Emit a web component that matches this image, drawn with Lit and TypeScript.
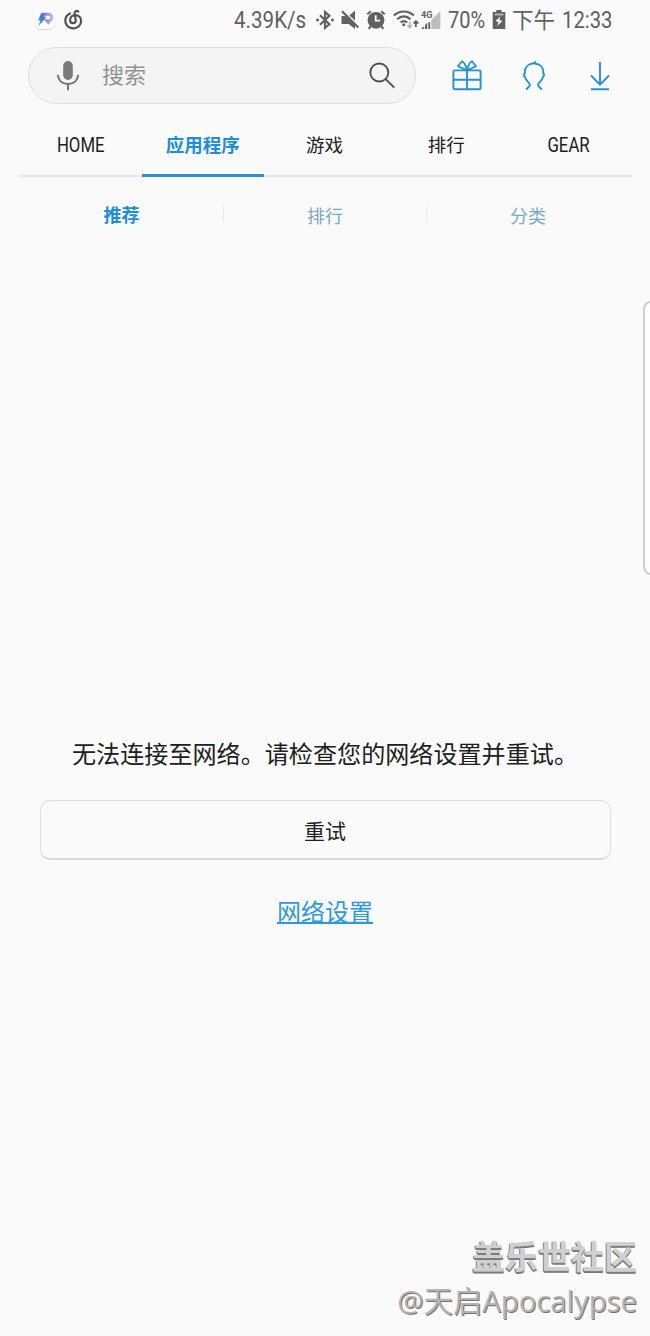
import { LitElement, html, css, svg } from "lit";
import { customElement, state } from "lit/decorators.js";

const GREY = "#616161";
const BLUE = "#2492d8";

const appBadge = svg`<svg width="22" height="22" viewBox="0 0 22 22">
  <defs>
    <linearGradient id="bolt" x1="0" y1="1" x2="1" y2="0"><stop offset="0" stop-color="#35c3e8"/><stop offset=".55" stop-color="#3f74dc"/><stop offset="1" stop-color="#8a8be0"/></linearGradient>
    <linearGradient id="loop" x1="0" y1="0" x2="1" y2="0"><stop offset="0" stop-color="#6f86de"/><stop offset="1" stop-color="#cba7e2"/></linearGradient>
  </defs>
  <rect x=".8" y="1.500" width="20.400" height="19.500" rx="6.500" fill="#dcd8d8"/>
  <rect x=".8" y=".5" width="20.400" height="19.500" rx="6.500" fill="#fdfdfe"/>
  <path d="M10 5.200h4.500a2.900 2.900 0 0 1 0 6.600h-1.500l2.400 2.800" fill="none" stroke="url(#loop)" stroke-width="3"/>
  <path d="M7.300 3.700h4.500l-1.400 4h2.200L4.200 17.500l2.200-6H4z" fill="url(#bolt)"/>
</svg>`;

const swirl = svg`<svg width="20" height="22" viewBox="0 0 20 22" fill="none" stroke="#505050" stroke-width="2.200" stroke-linecap="round">
  <path d="M6 4.500C3.200 5.800 1.300 8.500 1.300 11.800c0 4.500 3.500 7.600 7.900 7.600s7.900-3.200 7.900-7.500c0-3.300-2.400-5.700-5.900-5.700-3.100 0-5.100 2.100-5.100 4.700 0 2 1.200 3.300 3 3.300 1.900 0 2.900-1.500 2.600-3.200L10.600 4.800c-.4-2.600 2-3.700 3.700-2.200"/>
</svg>`;

const bluetooth = svg`<svg width="18" height="20" viewBox="0 0 18 20" fill="none" stroke="${GREY}" stroke-width="2.200">
  <path d="M4 5.300l9.400 9L9 18V2l4.400 3.800L4 14.700"/><circle cx="1.500" cy="10" r="1.500" fill="${GREY}" stroke="none"/><circle cx="16.500" cy="10" r="1.500" fill="${GREY}" stroke="none"/>
</svg>`;

const mute = svg`<svg width="18" height="20" viewBox="0 0 18 20" fill="${GREY}">
  <path d="M.500 6h4.200L14 14.800V19L7.700 14H.500zM8.400 5.500L14 .600v10z"/><path d="M1 1.200l16.300 16.300" stroke="${GREY}" stroke-width="2.200"/>
</svg>`;

const alarm = svg`<svg width="20" height="20" viewBox="0 0 20 20">
  <circle cx="10" cy="10.300" r="8.400" fill="${GREY}"/><path d="M1.300 4.300L4.800 1.300M18.700 4.300l-3.500-3M4.500 16.500L2.600 18.800M15.500 16.500l1.900 2.300" stroke="${GREY}" stroke-width="2"/>
  <path d="M9.700 5.300v5.400h4.300" fill="none" stroke="#fafafa" stroke-width="1.800"/>
</svg>`;

const wifi = svg`<svg width="26" height="20" viewBox="0 0 26 20" fill="none" stroke="${GREY}" stroke-width="2.100">
  <path d="M.800 5.600c5.700-5.500 14.400-5.500 20.100 0M4.200 9.200c4-3.800 9.300-3.800 13.300 0M7.600 12.600c2-1.900 4.600-1.900 6.600 0"/><circle cx="10.700" cy="14.800" r="1.500" fill="${GREY}" stroke="none"/>
  <path d="M16.700 11.500v6M14.600 15.300l2.100 2.300 2.100-2.300" stroke="#b4b4b4" stroke-width="1.500"/><path d="M22.900 17v-5M20.600 13.600l2.300-2.600 2.300 2.600" stroke-width="1.700"/>
</svg>`;

const signal = svg`<svg width="20" height="20" viewBox="0 0 20 20">
  <path d="M19.300 1v18H10.300V10z" fill="#bdbdbd"/><path d="M0 19l2.800-2.800V19zM4 19v-4l2.200-2.200V19zM7.300 19v-6.800h1.900V19z" fill="${GREY}"/>
  <text x="0" y="8" class="net" textLength="11.5" lengthAdjust="spacingAndGlyphs">4G</text>
</svg>`;

const battery = svg`<svg width="14" height="20" viewBox="0 0 14 20">
  <path d="M4.300 0h5.200v2h3.800v17H.700V2h3.600z" fill="${GREY}"/><path d="M2.600 3.500h8.800v2H2.600z" fill="#b5b5b5"/>
  <path d="M8.300 6.500L3.600 11.100l3 1-1.400 4 5.200-5-3-1z" fill="#fafafa"/>
</svg>`;

const mic = svg`<svg width="24" height="32" viewBox="0 0 24 32" fill="none" stroke="#6f6f6f">
  <rect x="7.200" y="1" width="9.600" height="19" rx="4.800" fill="#7a7a7a" stroke="none"/>
  <path d="M1.800 14.800C2.300 20.500 6.200 24 12 24s9.700-3.500 10.200-9.200M12 24v6.300" stroke-width="1.900"/>
</svg>`;

const lens = svg`<svg width="28" height="28" viewBox="0 0 28 28" fill="none" stroke="#505050" stroke-width="1.900">
  <circle cx="11.300" cy="10.500" r="9"/><path d="M17.500 17l8.800 8.600"/>
</svg>`;

const gift = svg`<svg width="30" height="32" viewBox="0 0 30 32" fill="none" stroke="${BLUE}" stroke-width="1.900" stroke-linejoin="round">
  <rect x="1.400" y="10.400" width="27.200" height="18.800" rx="1.300"/><path d="M1.400 19.800h27.200M15 10.400V29"/>
  <path d="M15 10.400L6 6.300 10 1.200c2.600 1.600 4.300 5.400 5 9.200zM15 10.400l9-4.100-4-5.100c-2.600 1.600-4.300 5.400-5 9.200z" stroke-width="1.800"/>
</svg>`;

const person = svg`<svg width="24" height="32" viewBox="0 0 24 32" fill="none" stroke="${BLUE}" stroke-width="1.900">
  <path d="M4.200 29.500l3.400-3.700c.5-.8.300-1.600-.3-2.300L4.200 19.700c-.7-.8-.8-1.700-1-2.700C1.600 15.800 1.500 14.300 2.900 13.200V10.900C3.500 6.500 7 3.700 11 3.500l2.300-1.200.2 1.500C18 4.200 21 7.300 21.200 11v2.300c1.300 1.100 1.200 2.600-.4 3.700-.2 1-.3 1.900-1 2.700L16.600 23.500c-.6.7-.8 1.500-.3 2.300l3.500 3.700"/>
</svg>`;

const download = svg`<svg width="22" height="32" viewBox="0 0 22 32" fill="none" stroke="${BLUE}" stroke-width="1.900">
  <path d="M11 2v23M2 15.500l9 9.200 9-9.200M2 29.200h18"/>
</svg>`;

@customElement("app-root")
export class AppRoot extends LitElement {
  @state() private tab = 1;
  @state() private section = 0;

  private tabs = ["HOME", "应用程序", "游戏", "排行", "GEAR"];
  private sections = ["推荐", "排行", "分类"];

  static styles = css`
    :host { display: block; position: relative; height: 1336px; background: #fafafa; overflow: hidden;
      font-family: Roboto, "Noto Sans CJK SC", sans-serif; color: #202020; }
    * { box-sizing: border-box; }
    svg { display: block; flex: none; overflow: visible; }
    button { font: inherit; color: inherit; border: 0; background: none; padding: 0; }
    .status { display: flex; height: 40px; padding-left: 34px; align-items: center; font-size: 23px; color: #606060; white-space: nowrap; }
    .app { margin-right: 8px; }
    .narrow { display: inline-block; transform: scaleX(.87); transform-origin: left; }
    .speed { width: 82px; margin-left: 150px; }
    .speed .narrow { transform: scaleX(.895); }
    .mute { margin-left: 7px; }
    .alarm { margin-left: 7px; }
    .wifi { margin-left: 7px; }
    .signal { margin-left: 2px; }
    .percent { width: 44px; margin-left: 7px; }
    .meridiem { width: 50px; margin-left: 6px; font-size: 21.500px; line-height: 28px; padding-top: 1px; }
    .clock { transform: scaleX(.88); }
    .net { font: bold 9.500px Roboto, sans-serif; fill: #616161; }
    .top { display: flex; height: 73px; padding: 7px 0 0 28px; }
    .search { display: flex; align-items: center; width: 388px; height: 57px; border: 1px solid #dedede; border-radius: 29px; background: #f4f4f4; padding: 0 19px 0 27px; }
    .hint { flex: 1; margin-left: 22px; font-size: 22px; line-height: 30px; color: #929292; }
    .actions { display: flex; align-items: center; height: 57px; margin-left: 36px; }
    .actions .person { margin-left: 40px; }
    .actions .get { margin-left: 43px; }
    .tabs { display: grid; grid-template-columns: repeat(5, 1fr); height: 64px; margin: 0 18px; padding: 0 3px 0 2px; box-shadow: inset 0 -2px #e7e7e7; }
    .tab { height: 64px; padding-top: 1px; font-size: 18.500px; border-bottom: 3px solid transparent; }
    .latin { display: inline-block; font-size: 19.500px; transform: scaleX(.86); padding-top: 3px; }
    .tab.on { color: #1c8edb; border-color: #2b91d1; font-weight: 700; }
    .sections { display: grid; grid-template-columns: repeat(3, 1fr); margin: 29px 21px 0 20px; height: 20px; }
    .section { font-size: 18px; line-height: 20px; color: #7ba9c7; }
    .section + .section { border-left: 1px solid #e8e8e8; height: 16px; line-height: 16px; padding-top: 3px; }
    .section.on { color: #1c8edb; font-weight: 700; }
    .error { margin-top: 511px; display: flex; flex-direction: column; align-items: center; }
    .message { margin: 0; font-size: 24.100px; line-height: 36px; white-space: nowrap; }
    .retry { width: 571px; height: 60px; margin-top: 27px; border: 1.500px solid #dedede; border-bottom: 2px solid #d9d9d9; border-radius: 10px; font-size: 21px; }
    .link { margin-top: 35px; font-size: 24px; line-height: 36px; color: #2d98dc; text-decoration: underline; text-decoration-thickness: 1.500px; text-underline-offset: 1px; text-decoration-skip-ink: none; }
    .edge { position: absolute; left: 643px; top: 301px; width: 16px; height: 274px; border: 2px solid #cecece; border-radius: 9px; background: #fdfdfd; }
    .mark { position: absolute; right: 13px; top: 1237px; text-align: right; white-space: nowrap; font-family: "Open Sans", "Noto Sans CJK SC", sans-serif; }
    .club { font-size: 33px; line-height: 40px; font-weight: 700; color: #d0d0d0; text-shadow: -1px 1px #808080, 0 2px #777; }
    .author { margin-top: 4px; font-size: 29.300px; line-height: 40px; color: #b9b3af; text-shadow: 1px 1px #737373; }
  `;

  render() {
    return html`
      <div class="status">
        <span class="app">${appBadge}</span>${swirl}
        <span class="speed"><span class="narrow">4.39K/s</span></span>
        ${bluetooth}<span class="mute">${mute}</span><span class="alarm">${alarm}</span>
        <span class="wifi">${wifi}</span><span class="signal">${signal}</span>
        <span class="percent"><span class="narrow">70%</span></span>${battery}
        <span class="meridiem">下午</span><span class="narrow clock">12:33</span>
      </div>
      <div class="top">
        <div class="search">${mic}<span class="hint">搜索</span>${lens}</div>
        <div class="actions">
          <button>${gift}</button><button class="person">${person}</button><button class="get">${download}</button>
        </div>
      </div>
      <nav class="tabs">
        ${this.tabs.map((t, i) => html`<button class="tab ${i === this.tab ? "on" : ""}" @click=${() => (this.tab = i)}>
          <span class="${/^[A-Z]/.test(t) ? "latin" : ""}">${t}</span></button>`)}
      </nav>
      <nav class="sections">
        ${this.sections.map((t, i) => html`<button class="section ${i === this.section ? "on" : ""}" @click=${() => (this.section = i)}>${t}</button>`)}
      </nav>
      <main class="error">
        <p class="message">无法连接至网络。请检查您的网络设置并重试。</p>
        <button class="retry">重试</button>
        <a class="link">网络设置</a>
      </main>
      <div class="edge"></div>
      <div class="mark"><div class="club">盖乐世社区</div><div class="author">@天启Apocalypse</div></div>
    `;
  }
}
